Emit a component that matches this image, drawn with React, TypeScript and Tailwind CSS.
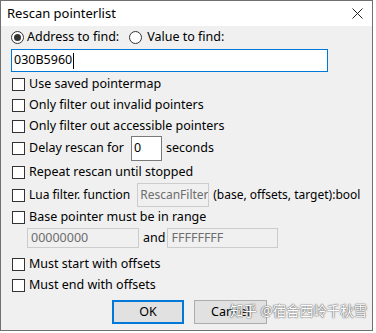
import React from "react";

const font = { fontFamily: '"Noto Sans", "Noto Sans CJK SC", sans-serif' };

function Check({ label, className = "" }: { label: React.ReactNode; className?: string }) {
  return (
    <div className={`flex items-center ${className}`}>
      <div className="ml-[11px] w-[13px] h-[13px] border border-[#333333] bg-white shrink-0" />
      <div className="ml-[4px] whitespace-nowrap flex items-center">{label}</div>
    </div>
  );
}

function Radio({ checked }: { checked: boolean }) {
  return (
    <div className="w-[13px] h-[13px] rounded-full border border-[#333333] bg-white flex items-center justify-center shrink-0">
      {checked && <div className="w-[7px] h-[7px] rounded-full bg-[#333333]" />}
    </div>
  );
}

export default function App() {
  return (
    <div className="w-[376px] h-[333px] bg-white relative overflow-hidden text-[12.5px] text-black" style={font}>
      <div className="w-[373px] h-[331px] border border-[#707070] bg-[#f0f0f0] flex flex-col">
        {/* title */}
        <div className="h-[25px] bg-white flex items-center justify-between shrink-0">
          <span className="ml-[6px] text-[13px] leading-none">Rescan pointerlist</span>
          <svg className="mr-[9px]" width="11" height="11" viewBox="0 0 11 11">
            <path d="M0.5 0.5 L10.5 10.5 M10.5 0.5 L0.5 10.5" stroke="#222" strokeWidth="1" />
          </svg>
        </div>
        {/* radio row */}
        <div className="mt-[2px] h-[18px] flex items-center">
          <div className="ml-[10px] flex items-center">
            <Radio checked />
            <span className="ml-[3px]">Address to find:</span>
          </div>
          <div className="ml-[10px] flex items-center">
            <Radio checked={false} />
            <span className="ml-[5px]">Value to find:</span>
          </div>
        </div>
        {/* input */}
        <div className="mt-[3px] ml-[10px] w-[317px] h-[23px] border border-[#0078d7] bg-white flex items-center pl-[2px]">
          <span>030B5960</span>
          <span className="w-px h-[16px] bg-black ml-[1px]" />
        </div>
        <Check className="mt-[2px] h-[21px]" label="Use saved pointermap" />
        <Check className="h-[21px]" label="Only filter out invalid pointers" />
        <Check className="h-[20px]" label="Only filter out accessible pointers" />
        <Check
          className="h-[25px]"
          label={
            <>
              <span>Delay rescan for</span>
              <div className="ml-[7px] w-[31px] h-[25px] border border-[#7a7a7a] bg-white flex items-center pl-[2px]">0</div>
              <span className="ml-[4px]">seconds</span>
            </>
          }
        />
        <Check className="h-[22px]" label="Repeat rescan until stopped" />
        <Check
          className="h-[24px]"
          label={
            <>
              <span className="text-[12px]">Lua filter. function</span>
              <div className="ml-[7px] w-[72px] h-[24px] border border-[#cccccc] bg-[#f0f0f0] flex items-center pl-[2px] overflow-hidden text-[#6d6d6d] text-[12px]">
                RescanFilter
              </div>
              <span className="ml-[4px] text-[12px]">(base, offsets, target):bool</span>
            </>
          }
        />
        <Check className="h-[21px]" label="Base pointer must be in range" />
        <div className="h-[20px] flex items-center">
          <div className="ml-[26px] w-[112px] h-[20px] border border-[#cccccc] bg-[#f0f0f0] flex items-center pl-[3px] text-[#6d6d6d]">
            00000000
          </div>
          <span className="ml-[4px]">and</span>
          <div className="ml-[2px] w-[111px] h-[20px] border border-[#cccccc] bg-[#f0f0f0] flex items-center pl-[3px] text-[#6d6d6d]">
            FFFFFFFF
          </div>
        </div>
        <Check className="mt-[5px] h-[22px]" label="Must start with offsets" />
        <Check className="h-[21px]" label="Must end with offsets" />
        <div className="mt-[4px] flex">
          <div className="ml-[111px] w-[72px] h-[24px] border-2 border-[#0078d7] bg-[#e1e1e1] flex items-center justify-center">
            OK
          </div>
          <div className="ml-[10px] w-[73px] h-[24px] border border-[#adadad] bg-[#e1e1e1] flex items-center justify-center">
            Cancel
          </div>
        </div>
      </div>
      {/* watermark */}
      <div
        className="absolute left-[230px] top-[302px] text-[13.5px] leading-[19px] text-white whitespace-nowrap [text-shadow:0_0_1px_#666,0_0_1px_#666,0_0_2px_#999]"
        style={font}
      >
        知乎 @宿舍西岭千秋雪
      </div>
    </div>
  );
}
